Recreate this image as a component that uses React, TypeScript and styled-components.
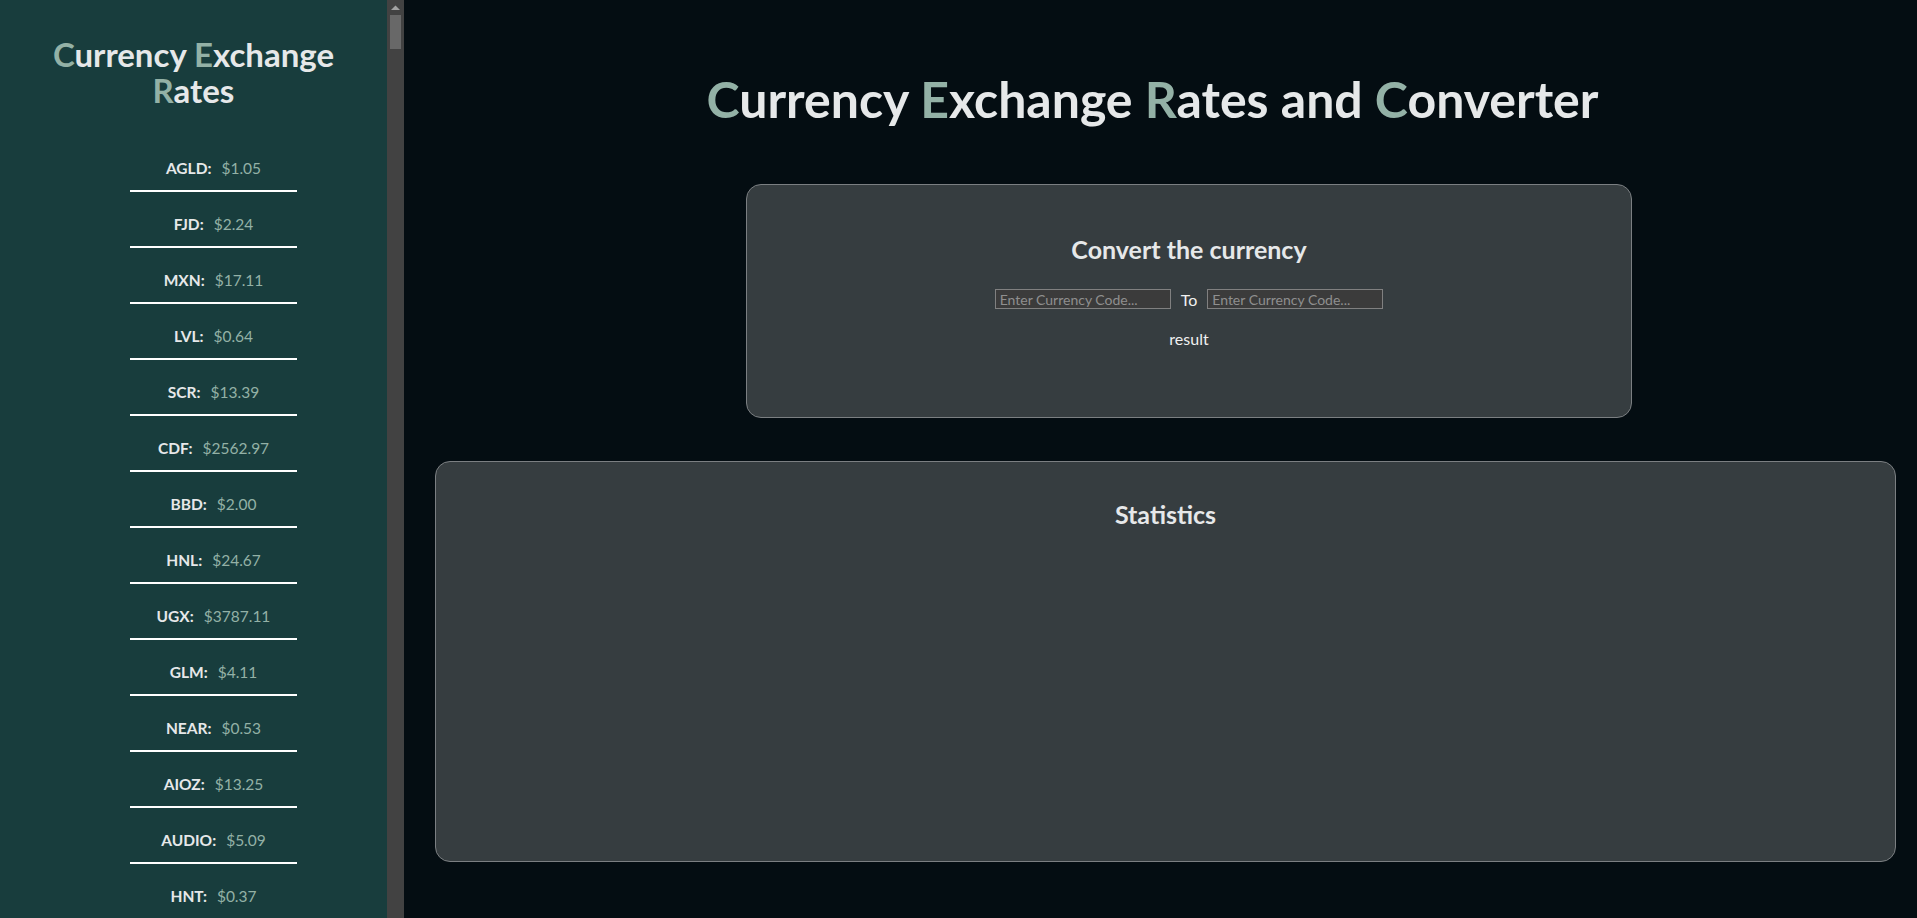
import React from "react";
import styled, { createGlobalStyle } from "styled-components";

const GlobalStyle = createGlobalStyle`
  html, body {
    margin: 0;
    padding: 0;
    background: #040d12;
    overflow: hidden;
  }
  body {
    font-family: Lato, "Noto Sans", sans-serif;
    color: #e6e8e9;
  }
  * { box-sizing: border-box; }
`;

const Layout = styled.div`
  display: flex;
  height: 100vh;
  width: 100%;
`;

const Sidebar = styled.aside`
  display: flex;
  width: 404px;
  flex-shrink: 0;
  height: 100vh;
  background: #183d3d;
`;

const SidebarScroll = styled.div`
  flex: 1;
  min-width: 0;
  height: 100%;
  overflow-y: auto;
  scrollbar-width: none;
  &::-webkit-scrollbar {
    display: none;
  }
`;

const ScrollTrack = styled.div`
  width: 17px;
  flex-shrink: 0;
  height: 100%;
  background: #424242;
  display: flex;
  flex-direction: column;
  align-items: center;
  padding-top: 5px;
`;

const ScrollThumb = styled.div`
  width: 11px;
  height: 34px;
  margin-top: 5px;
  background: #686868;
`;

const SideTitle = styled.h1`
  margin: 0;
  padding: 36px 30px 0;
  font-size: 33px;
  line-height: 36px;
  font-weight: 700;
  text-align: center;
  color: #e6e8e9;
`;

const Accent = styled.span`
  color: #93b1a6;
`;

const RateList = styled.ul`
  list-style: none;
  margin: 28px 0 0;
  padding: 0 0 0 40px;
`;

const RateItem = styled.li`
  width: 167px;
  margin: 0 auto;
  padding: 22px 0 12px;
  line-height: 20px;
  font-size: 15.5px;
  text-align: center;
  border-bottom: 2px solid #ffffff;
`;

const Code = styled.span`
  font-weight: 700;
  color: #e6e8e9;
`;

const Value = styled.span`
  margin-left: 10px;
  color: #93b1a6;
`;

const Main = styled.main`
  flex: 1;
  min-width: 0;
  height: 100vh;
  overflow: hidden;
  padding: 0 21px 0 31px;
`;

const MainTitle = styled.h1`
  margin: 0;
  padding: 70px 26px 0 0;
  font-size: 50px;
  line-height: 58px;
  font-weight: 700;
  text-align: center;
  color: #e6e8e9;
`;

const Card = styled.section<{
  $width?: string;
  $offset?: string;
  $height?: string;
  $top: string;
  $padTop: string;
  $padBottom?: string;
}>`
  width: ${(p) => p.$width ?? "auto"};
  height: ${(p) => p.$height ?? "auto"};
  margin: ${(p) => p.$top} 0 0 ${(p) => p.$offset ?? "0"};
  padding: ${(p) => p.$padTop} 0 ${(p) => p.$padBottom ?? "0"};
  background: #363d40;
  border: 1px solid #7b7f82;
  border-radius: 15px;
  text-align: center;
`;

const CardTitle = styled.h2`
  margin: 0;
  font-size: 25px;
  line-height: 29px;
  font-weight: 700;
  color: #e6e8e9;
`;

const ConvertRow = styled.div`
  display: flex;
  justify-content: center;
  align-items: center;
  margin-top: 25px;
`;

const CodeInput = styled.input`
  width: 176px;
  height: 20px;
  padding: 0 4px;
  border: 1px solid #808080;
  background: #3b3b3b;
  color: #e6e8e9;
  font-family: Lato, "Noto Sans", sans-serif;
  font-size: 14px;
  outline: none;
  &::placeholder {
    color: #8f8f8f;
  }
`;

const ToLabel = styled.span`
  margin: 0 10px;
  font-size: 16px;
  color: #f0f0f0;
`;

const Result = styled.p`
  margin: 20px 0 0;
  font-size: 16px;
  line-height: 20px;
  color: #f0f0f0;
`;

const FIRST = ["AGLD", "FJD", "MXN", "LVL", "SCR", "CDF", "BBD", "HNL", "UGX", "GLM", "NEAR", "AIOZ", "AUDIO", "HNT"];
const FIRST_VALUES = ["1.05", "2.24", "17.11", "0.64", "13.39", "2562.97", "2.00", "24.67", "3787.11", "4.11", "0.53", "13.25", "5.09", "0.37"];

const MORE =
  "AED AFN ALL AMD ANG AOA ARS AUD AWG AZN BAM BDT BGN BHD BIF BMD BND BOB BRL BSD BTN BWP BYN BYR BZD CAD CHF CLF CLP CNH CNY COP CRC CUC CVE CZK DJF DKK DOP DZD EGP ERN ETB EUR FKP GBP GEL GGP GHS GIP GMD GNF GTQ GYD HKD HRK HTG HUF IDR ILS IMP INR IQD ISK JEP JMD JOD JPY KES KGS KHR KMF KRW KWD KYD KZT LAK LBP LKR LRD LSL LTL LYD MAD MDL MGA MKD MMK MNT MOP MRU MUR MVR MWK MYR MZN NAD NGN NIO NOK NPR NZD OMR PAB PEN PGK PHP PKR PLN PYG QAR RON RSD RUB RWF SAR SBD SEK SGD SHP SLL SOS SRD SSP STD SVC SZL THB TJS TMT TND TOP TRY TTD TWD TZS UAH USD UYU UZS VES VND VUV WST XAF XAG XAU XCD XDR XOF XPD XPF XPT YER ZAR ZMW ZWL " +
  "00 1INCH AAVE ABT ACH ACS ACX ADA AERGO AERO AKT ALCX ALEPH ALGO ALICE AMP ANKR ANT APE API3 APT ARB ARKM ARPA ASM AST ATA ATOM AUCTION AURORA AVAX AVT AXL AXS BADGER BAL BAND BAT BCH BICO BIGTIME BIT BLUR BLZ BNT BOBA BOND BTC BTRST BUSD C98 CBETH CELR CGLD CHZ CLV COMP COTI COVAL CRO CRPT CRV CTSI CTX CVC CVX DAI DAR DASH DEXT DIA DIMO DNT DOGE DOT DREP DYP EGLD ELA ENS EOS ETC ETH ETH2 EUROC FET FIDA FIL FIS FLOW FLR FORT FORTH FOX FX GAL GALA GFI GHST GMT GNO GODS GRT GST GTC GUSD GYEN HBAR HFT HIGH HOPR ICP IDEX ILV IMX INDEX INJ INV IOTX JASMY JTO JUP KAVA KNC KRL KSM LCX LDO LINK LIT LOKA LOOM LPT LQTY LRC LSETH LTC MAGIC MANA MASK MATH MATIC MCO2 MDT MEDIA METIS MINA MKR MLN MNDE MONA MPL MSOL MTL MULTI MUSE MXC NCT NEST NKN NMR OCEAN OGN OMG ONDO OOKI OP ORCA ORN OSMO OXT PAX PERP PLA PLU PNG POLS POLY POND POWR PRIME PRO PRQ PUNDIX PYR PYUSD QI QNT QSP QUICK RAD RAI RARE RARI RBN REN REP REQ RGT RLC RLY RNDR RONIN ROSE RPL SAND SEAM SEI SHIB SHPING SKL SNT SNX SOL SPELL STG STORJ STRK STX SUI SUKU SUPER SUSHI SWFTC SYLO SYN T TIA TIME TONE TRAC TRB TRIBE TRU TVK UMA UNFI UNI UPI USDC USDT UST VARA VET VGX VOXEL VTHO WAMPL WAXL WBTC WCFG WLUNA XCN XLM XMON XRP XTZ XYO YFI YFII ZEC ZEN ZETA ZRX";

function fakeRate(code: string): string {
  let h = 7;
  for (let i = 0; i < code.length; i++) h = (h * 131 + code.charCodeAt(i)) % 1000003;
  const scales = [0.01, 0.1, 1, 1, 10, 100, 1000];
  const v = ((h % 997) / 100 + 0.01) * scales[h % scales.length];
  return v.toFixed(2);
}

const RATES: { code: string; value: string }[] = [
  ...FIRST.map((code, i) => ({ code, value: FIRST_VALUES[i] })),
  ...MORE.split(" ")
    .filter((c) => c && !FIRST.includes(c))
    .map((code) => ({ code, value: fakeRate(code) })),
];

function Highlighted({ words, skip = [] }: { words: string[]; skip?: string[] }) {
  return (
    <>
      {words.map((w, i) => (
        <React.Fragment key={i}>
          {i > 0 ? " " : ""}
          {skip.includes(w) ? (
            w
          ) : (
            <>
              <Accent>{w[0]}</Accent>
              {w.slice(1)}
            </>
          )}
        </React.Fragment>
      ))}
    </>
  );
}

export default function App() {
  return (
    <>
      <GlobalStyle />
      <Layout>
        <Sidebar>
          <SidebarScroll>
            <SideTitle>
              <Highlighted words={["Currency", "Exchange", "Rates"]} />
            </SideTitle>
            <RateList>
              {RATES.map((r) => (
                <RateItem key={r.code}>
                  <Code>{r.code}:</Code>
                  <Value>${r.value}</Value>
                </RateItem>
              ))}
            </RateList>
          </SidebarScroll>
          <ScrollTrack aria-hidden="true">
            <svg width="9" height="5" viewBox="0 0 9 5">
              <polygon points="0,5 4.5,0.5 9,5" fill="#a3a3a3" />
            </svg>
            <ScrollThumb />
          </ScrollTrack>
        </Sidebar>
        <Main>
          <MainTitle>
            <Highlighted words={["Currency", "Exchange", "Rates", "and", "Converter"]} skip={["and"]} />
          </MainTitle>
          <Card $width="886px" $offset="311px" $top="56px" $padTop="50px" $padBottom="68px">
            <CardTitle>Convert the currency</CardTitle>
            <ConvertRow>
              <CodeInput type="text" placeholder="Enter Currency Code..." />
              <ToLabel>To</ToLabel>
              <CodeInput type="text" placeholder="Enter Currency Code..." />
            </ConvertRow>
            <Result>result</Result>
          </Card>
          <Card $height="401px" $top="43px" $padTop="38px">
            <CardTitle>Statistics</CardTitle>
          </Card>
        </Main>
      </Layout>
    </>
  );
}
